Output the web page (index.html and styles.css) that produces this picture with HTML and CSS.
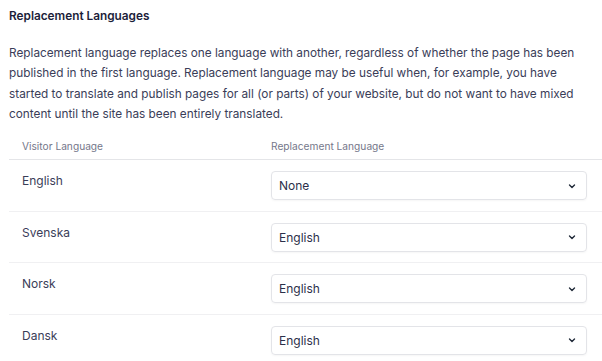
FILE: index.html
```html
<!DOCTYPE html>
<html lang="en">
<head>
    <meta charset="UTF-8">
    <meta name="viewport" content="width=device-width, initial-scale=1.0">
    <title>Replacement Languages</title>
    <link rel="stylesheet" href="styles.css">
</head>
<body>
    <div class="section">
        <h2>Replacement Languages</h2>
        <p class="intro">Replacement language replaces one language with another, regardless of whether the page has been published in the first language. Replacement language may be useful when, for example, you have started to translate and publish pages for all (or parts) of your website, but do not want to have mixed content until the site has been entirely translated.</p>

        <div class="lang-table">
            <div class="lang-head">
                <div class="cell-name">Visitor Language</div>
                <div class="cell-select">Replacement Language</div>
            </div>
            <div class="lang-row">
                <div class="cell-name">English</div>
                <div class="cell-select">
                    <div class="select"><span>None</span><svg viewBox="0 0 10 10" width="10" height="10"><path d="M2.5 4 L5 6.5 L7.5 4" fill="none" stroke="#1f2937" stroke-width="1.4" stroke-linecap="round" stroke-linejoin="round"/></svg></div>
                </div>
            </div>
            <div class="lang-row">
                <div class="cell-name">Svenska</div>
                <div class="cell-select">
                    <div class="select"><span>English</span><svg viewBox="0 0 10 10" width="10" height="10"><path d="M2.5 4 L5 6.5 L7.5 4" fill="none" stroke="#1f2937" stroke-width="1.4" stroke-linecap="round" stroke-linejoin="round"/></svg></div>
                </div>
            </div>
            <div class="lang-row">
                <div class="cell-name">Norsk</div>
                <div class="cell-select">
                    <div class="select"><span>English</span><svg viewBox="0 0 10 10" width="10" height="10"><path d="M2.5 4 L5 6.5 L7.5 4" fill="none" stroke="#1f2937" stroke-width="1.4" stroke-linecap="round" stroke-linejoin="round"/></svg></div>
                </div>
            </div>
            <div class="lang-row">
                <div class="cell-name">Dansk</div>
                <div class="cell-select">
                    <div class="select"><span>English</span><svg viewBox="0 0 10 10" width="10" height="10"><path d="M2.5 4 L5 6.5 L7.5 4" fill="none" stroke="#1f2937" stroke-width="1.4" stroke-linecap="round" stroke-linejoin="round"/></svg></div>
                </div>
            </div>
        </div>
    </div>
</body>
</html>
```

FILE: styles.css
```css
body {
    font-family: Inter, "Noto Sans", sans-serif;
    background-color: #fff;
    color: #3a3d58;
    margin: 0;
    padding: 0;
}
.section {
    padding: 8px 0 0 9px;
}
h2 {
    font-size: 11.8px;
    font-weight: 600;
    color: #1c1e3a;
    margin: 0;
    line-height: 17px;
}
.intro {
    font-size: 11.8px;
    line-height: 20.3px;
    margin: 18px 10px 0 0;
}
.lang-table {
    margin-top: 12px;
}
.lang-head,
.lang-row {
    display: grid;
    grid-template-columns: 262px 1fr;
    border-bottom: 1px solid #f0f0f2;
}
.lang-head {
    font-size: 10.2px;
    color: #75778a;
    height: 23px;
    line-height: 14px;
    border-bottom-color: #e4e5e8;
}
.lang-head .cell-name {
    padding: 3px 0 0 13px;
}
.lang-head .cell-select {
    padding-top: 3px;
}
.lang-row {
    height: 50.5px;
    font-size: 12px;
}
.lang-row .cell-name {
    padding: 13px 0 0 13px;
    line-height: 16px;
}
.lang-row .cell-select {
    padding: 11px 15px 0 0;
}
.select {
    height: 29px;
    box-sizing: border-box;
    border: 1px solid #e3e4e8;
    border-radius: 4px;
    box-shadow: 0 1px 2px rgba(0, 0, 0, 0.04);
    display: flex;
    align-items: center;
    justify-content: space-between;
    padding: 0 9px 0 7px;
    color: #2c2f4a;
}
```
